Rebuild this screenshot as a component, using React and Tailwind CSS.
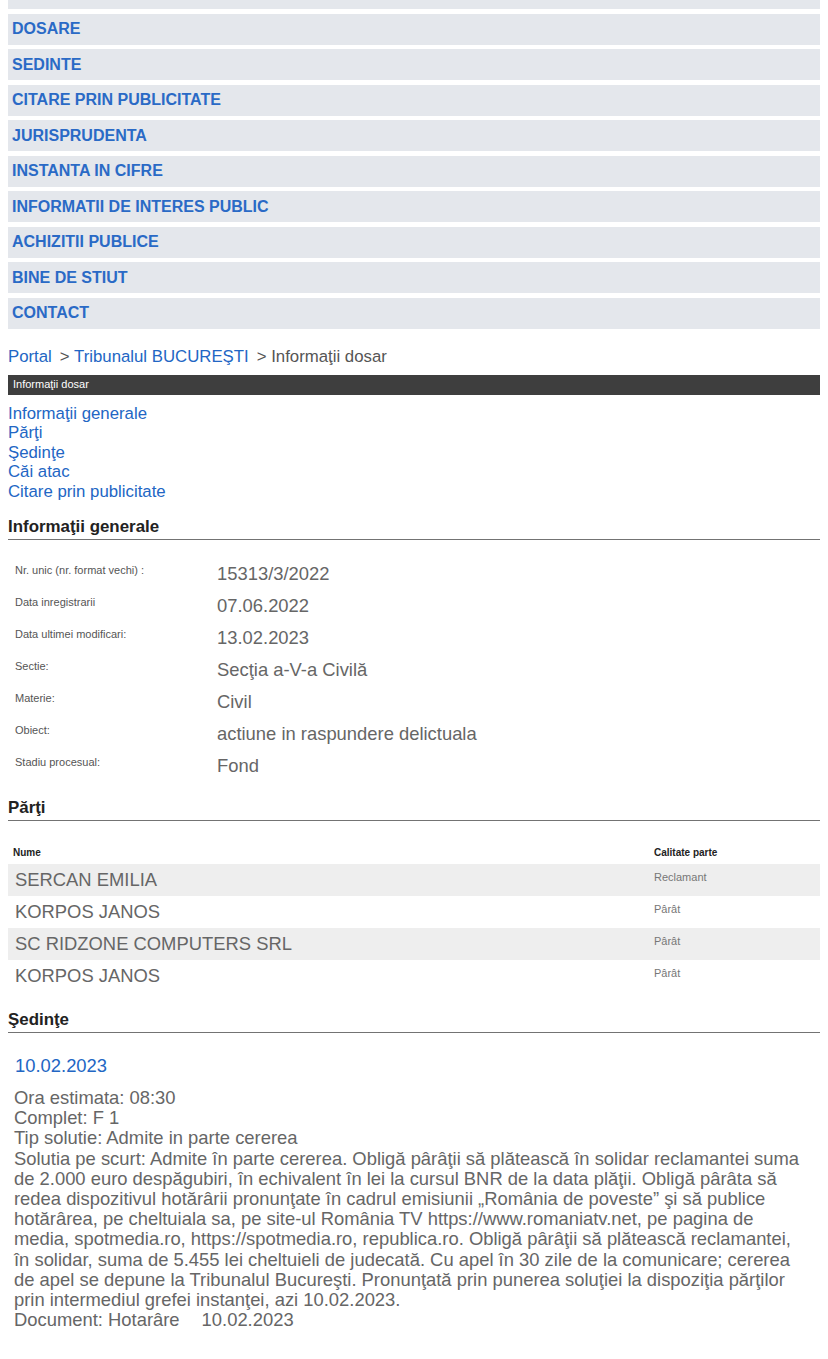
const menu = [
  "DOSARE",
  "SEDINTE",
  "CITARE PRIN PUBLICITATE",
  "JURISPRUDENTA",
  "INSTANTA IN CIFRE",
  "INFORMATII DE INTERES PUBLIC",
  "ACHIZITII PUBLICE",
  "BINE DE STIUT",
  "CONTACT",
];

const anchors = ["Informaţii generale", "Părţi", "Şedinţe", "Căi atac", "Citare prin publicitate"];

const details = [
  ["Nr. unic (nr. format vechi) :", "15313/3/2022"],
  ["Data inregistrarii", "07.06.2022"],
  ["Data ultimei modificari:", "13.02.2023"],
  ["Sectie:", "Secţia a-V-a Civilă"],
  ["Materie:", "Civil"],
  ["Obiect:", "actiune in raspundere delictuala"],
  ["Stadiu procesual:", "Fond"],
];

const parti = [
  ["SERCAN EMILIA", "Reclamant"],
  ["KORPOS JANOS", "Pârât"],
  ["SC RIDZONE COMPUTERS SRL", "Pârât"],
  ["KORPOS JANOS", "Pârât"],
];

const solutie =
  "Solutia pe scurt: Admite în parte cererea. Obligă pârâţii să plătească în solidar reclamantei suma de 2.000 euro despăgubiri, în echivalent în lei la cursul BNR de la data plăţii. Obligă pârâta să redea dispozitivul hotărârii pronunţate în cadrul emisiunii „România de poveste” şi să publice hotărârea, pe cheltuiala sa, pe site-ul România TV https://www.romaniatv.net, pe pagina de media, spotmedia.ro, https://spotmedia.ro, republica.ro. Obligă pârâţii să plătească reclamantei, în solidar, suma de 5.455 lei cheltuieli de judecată. Cu apel în 30 zile de la comunicare; cererea de apel se depune la Tribunalul Bucureşti. Pronunţată prin punerea soluţiei la dispoziţia părţilor prin intermediul grefei instanţei, azi 10.02.2023.";

const SectionTitle = ({ children }) => (
  <h2 className="border-b-[1.5px] border-[#737373] pb-[3px] text-[16.9px] font-bold leading-[19px] text-[#222]">
    {children}
  </h2>
);

export default function App() {
  return (
    <div className="min-h-screen bg-white px-2 font-['Liberation_Sans',Arial,sans-serif]">
      <nav className="flex flex-col gap-[4.5px]">
        <div className="h-[9px] bg-[#e4e7ec]" />
        {menu.map((item) => (
          <a
            key={item}
            className="flex h-[31px] items-center bg-[#e4e7ec] px-1 text-[16px] font-bold text-[#2a6ac6]"
          >
            {item}
          </a>
        ))}
      </nav>

      <div className="mt-[18px] text-[16.8px] leading-[19px] text-[#555]">
        <a className="text-[#2266c4]">Portal</a>
        <span className="ml-[8px]">&gt; </span>
        <a className="text-[#2266c4]">Tribunalul BUCUREŞTI</a>
        <span className="ml-[8px]">&gt; Informaţii dosar</span>
      </div>

      <div className="mt-[9px] flex h-5 items-center bg-[#3e3e3e] px-[5px] text-[11px] text-white">
        Informaţii dosar
      </div>

      <ul className="mt-[9px] text-[16.8px] leading-[19.5px] text-[#2266c4]">
        {anchors.map((a) => (
          <li key={a}>
            <a>{a}</a>
          </li>
        ))}
      </ul>

      <div className="mt-[16px]">
        <SectionTitle>Informaţii generale</SectionTitle>
      </div>
      <div className="mt-[17px] flex flex-col">
        {details.map(([label, value]) => (
          <div key={label} className="flex h-8 items-start pt-[5.5px]">
            <div className="w-[209px] pl-[7px] pt-[1px] text-[11px] leading-[13px] text-[#555]">{label}</div>
            <div className="text-[18.4px] leading-[21px] text-[#666]">{value}</div>
          </div>
        ))}
      </div>

      <div className="mt-[17px]">
        <SectionTitle>Părţi</SectionTitle>
      </div>
      <div className="mt-[26px] flex text-[10px] font-bold leading-[12px] text-[#222]">
        <div className="w-[646px] pl-[5px]">Nume</div>
        <div>Calitate parte</div>
      </div>
      <div className="mt-[5px] flex flex-col">
        {parti.map(([nume, calitate], i) => (
          <div key={i} className={`flex h-8 ${i % 2 === 0 ? "bg-[#eeeeee]" : "bg-white"}`}>
            <div className="flex w-[646px] items-center pl-[7px] text-[18.4px] text-[#666]">{nume}</div>
            <div className="pt-[6.5px] text-[11px] leading-[13px] text-[#777]">{calitate}</div>
          </div>
        ))}
      </div>

      <div className="mt-[18px]">
        <SectionTitle>Şedinţe</SectionTitle>
      </div>
      <div className="pb-8 pl-[6px] pr-[9px]">
        <div className="mt-[22px] pl-[1px] text-[18.4px] leading-[21px] text-[#2266c4]">10.02.2023</div>
        <div className="mt-[12px] text-[18.4px] leading-[20.2px] text-[#666]">
          <div>Ora estimata: 08:30</div>
          <div>Complet: F 1</div>
          <div>Tip solutie: Admite in parte cererea</div>
          <div>{solutie}</div>
          <div>
            Document: Hotarâre<span className="ml-[22px]">10.02.2023</span>
          </div>
        </div>
      </div>
    </div>
  );
}
